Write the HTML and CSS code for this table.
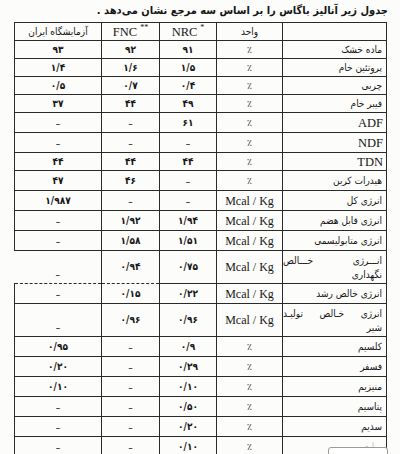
FILE: index.html
```html
<!DOCTYPE html>
<html lang="fa" dir="rtl">
<head>
<meta charset="utf-8">
<title>آنالیز باگاس</title>
<link rel="stylesheet" href="styles.css">
</head>
<body>
<div class="page">
  <div class="head"><p class="title">جدول زیر آنالیز باگاس را بر اساس سه مرجع نشان می‌دهد .</p></div>
  <table class="grid">
    <colgroup>
      <col class="c-label">
      <col class="c-unit">
      <col class="c-nrc">
      <col class="c-fnc">
      <col class="c-iran">
    </colgroup>
    <thead>
      <tr>
        <th></th>
        <th class="fa">واحد</th>
        <th class="lat"><span class="ltr">NRC<sup>*</sup></span></th>
        <th class="lat"><span class="ltr">FNC<sup>**</sup></span></th>
        <th class="fa">آزمایشگاه ایران</th>
      </tr>
    </thead>
    <tbody>
      <tr><td class="lbl">ماده خشک</td><td class="u">٪</td><td>۹۱</td><td>۹۲</td><td>۹۳</td></tr>
      <tr><td class="lbl">پروتئین خام</td><td class="u">٪</td><td>۱/۵</td><td>۱/۶</td><td>۱/۴</td></tr>
      <tr><td class="lbl">چربی</td><td class="u">٪</td><td>۰/۴</td><td>۰/۷</td><td>۰/۵</td></tr>
      <tr><td class="lbl">فیبر خام</td><td class="u">٪</td><td>۴۹</td><td>۴۴</td><td>۳۷</td></tr>
      <tr><td class="lbl lat">ADF</td><td class="u">٪</td><td>۶۱</td><td class="d">–</td><td class="d">–</td></tr>
      <tr><td class="lbl lat">NDF</td><td class="u">٪</td><td class="d">–</td><td class="d">–</td><td class="d">–</td></tr>
      <tr><td class="lbl lat">TDN</td><td class="u">٪</td><td>۴۴</td><td>۴۴</td><td>۴۴</td></tr>
      <tr><td class="lbl">هیدرات کربن</td><td class="u">٪</td><td class="d">–</td><td>۴۶</td><td>۴۷</td></tr>
      <tr><td class="lbl">انرژی کل</td><td class="u lat">Mcal / Kg</td><td class="d">–</td><td class="d">–</td><td>۱/۹۸۷</td></tr>
      <tr><td class="lbl">انرژی قابل هضم</td><td class="u lat">Mcal / Kg</td><td>۱/۹۴</td><td>۱/۹۲</td><td class="d">–</td></tr>
      <tr><td class="lbl">انرژی متابولیسمی</td><td class="u lat">Mcal / Kg</td><td>۱/۵۱</td><td>۱/۵۸</td><td class="d">–</td></tr>
      <tr class="tall"><td class="lbl two"><span class="just">انـــرژی خـــالص</span>نگهداری</td><td class="u lat">Mcal / Kg</td><td>۰/۷۵</td><td class="dash">۰/۹۴</td><td class="d dash open">–</td></tr>
      <tr><td class="lbl">انرژی خالص رشد</td><td class="u lat">Mcal / Kg</td><td>۰/۲۲</td><td class="dash-top">۰/۱۵</td><td class="d dash-top">–</td></tr>
      <tr class="tall"><td class="lbl two"><span class="just">انرژی خـالص تولیـد</span>شیر</td><td class="u lat">Mcal / Kg</td><td>۰/۹۶</td><td>۰/۹۶</td><td class="d">–</td></tr>
      <tr><td class="lbl">کلسیم</td><td class="u">٪</td><td>۰/۹</td><td class="d">–</td><td>۰/۹۵</td></tr>
      <tr><td class="lbl">فسفر</td><td class="u">٪</td><td>۰/۲۹</td><td class="d">–</td><td>۰/۲۰</td></tr>
      <tr><td class="lbl">منیزیم</td><td class="u">٪</td><td>۰/۱۰</td><td class="d">–</td><td>۰/۱۰</td></tr>
      <tr><td class="lbl">پتاسیم</td><td class="u">٪</td><td>۰/۵۰</td><td class="d">–</td><td class="d">–</td></tr>
      <tr><td class="lbl">سدیم</td><td class="u">٪</td><td>۰/۲۰</td><td class="d">–</td><td class="d">–</td></tr>
      <tr class="last"><td class="lbl faint">منابع</td><td class="u">٪</td><td>۰/۱۰</td><td class="d">–</td><td class="d">–</td></tr>
    </tbody>
  </table>
  <div class="tag"></div>
</div>
</body>
</html>
```

FILE: styles.css
```css
html, body {
  margin: 0;
  padding: 0;
  background: #fcfcfb;
}

.page {
  position: relative;
  width: 400px;
  height: 454px;
  overflow: hidden;
  color: #161616;
  font-family: "DejaVu Sans Condensed", "DejaVu Sans", sans-serif;
  font-stretch: condensed;
}

.head {
  height: 22px;
  padding-right: 12px;
  display: flex;
  justify-content: flex-start;
  align-items: flex-end;
}

.title {
  margin: 0 0 3px 0;
  font-size: 11px;
  line-height: 16px;
  font-weight: bold;
  white-space: nowrap;
}

.grid {
  margin: 0 13px 0 0;
  border-collapse: collapse;
  table-layout: fixed;
  width: 372px;
  font-size: 10px;
}

.c-label { width: 104px; }
.c-unit { width: 66px; }
.c-nrc { width: 57px; }
.c-fnc { width: 58px; }
.c-iran { width: 87px; }

.grid th,
.grid td {
  border: 1px solid #2a2a2a;
  padding: 0;
  height: 17px;
  line-height: 12px;
  text-align: center;
  vertical-align: middle;
  font-weight: bold;
  white-space: nowrap;
}

.grid th {
  height: 17px;
  font-weight: normal;
}

.fa {
  font-size: 10px;
}

.lat {
  font-family: "Liberation Serif", serif;
  font-stretch: normal;
  font-size: 12.5px;
}

.ltr {
  direction: ltr;
  unicode-bidi: isolate;
}

sup {
  font-size: 8px;
  line-height: 0;
  margin-left: 3px;
}

.grid td.lbl {
  text-align: right;
  padding-right: 4px;
  font-weight: normal;
}

.grid td.lbl.lat {
  font-size: 12.5px;
  padding-right: 3px;
}

.grid td.u {
  font-weight: normal;
}

.grid td.u.lat {
  font-size: 12px;
}

.grid td.d {
  font-weight: normal;
  vertical-align: bottom;
  padding-bottom: 2px;
}

.grid tr.tall td {
  height: 29px;
}

.grid td.two {
  white-space: normal;
  line-height: 14px;
  vertical-align: top;
  padding-top: 3px;
}

.just {
  display: block;
  text-align: justify;
  text-align-last: justify;
}

.grid td.dash {
  border-bottom: 1px dashed #2a2a2a;
}

.grid td.dash-top {
  border-top: 1px dashed #2a2a2a;
}

.grid td.open {
  border-left: hidden;
}

.grid td.faint {
  color: #c4c4c4;
}

.tag {
  position: absolute;
  left: 328px;
  top: 447px;
  width: 58px;
  height: 20px;
  border: 1px solid #9a9a9a;
  border-radius: 3px;
  background: #fff;
}
```
